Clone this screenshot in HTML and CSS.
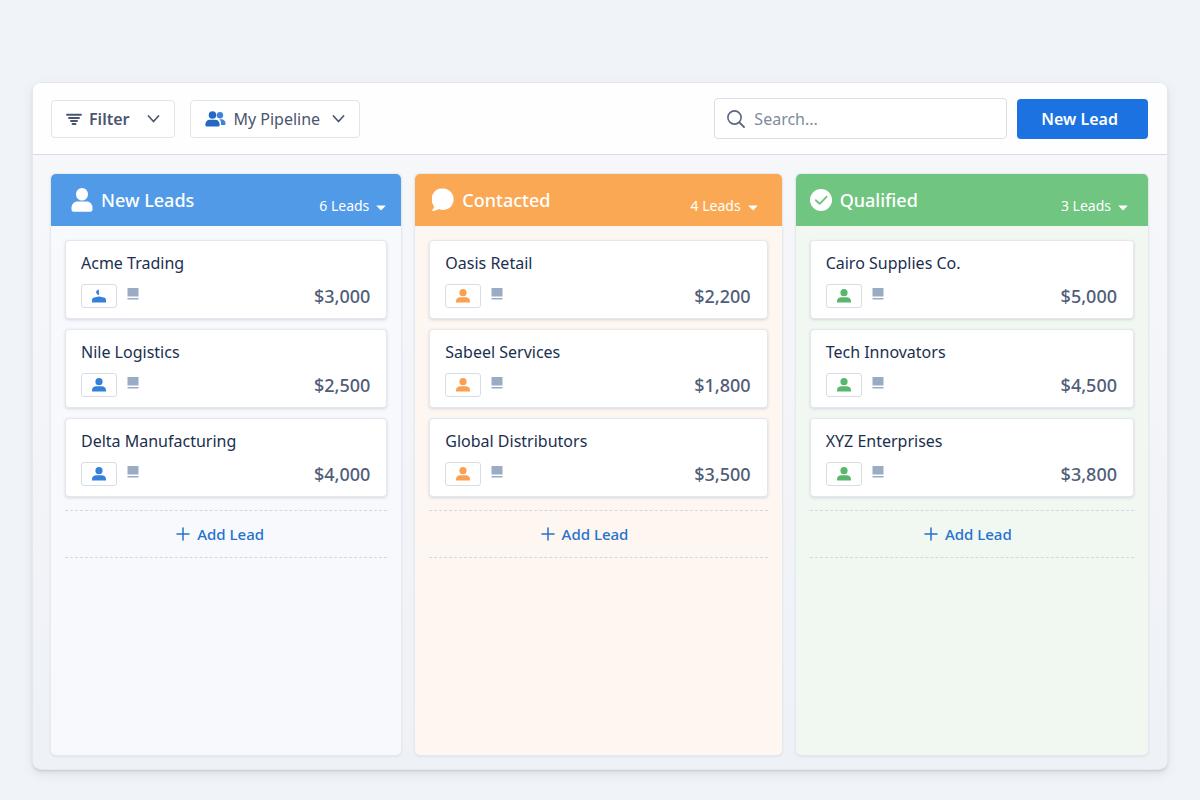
FILE: index.html
```html
<!DOCTYPE html>
<html lang="en">
<head>
<meta charset="utf-8">
<meta name="viewport" content="width=device-width, initial-scale=1">
<title>Leads pipeline</title>
<link rel="stylesheet" href="styles.css">
</head>
<body>
<svg class="sprite" aria-hidden="true">
  <symbol id="person" viewBox="0 0 22 24"><ellipse cx="11" cy="6.3" rx="6" ry="6.3"/><path d="M.5 20c0-4.200 2.600-6.600 6-6.600h9c3.400 0 6 2.400 6 6.600v1.500a2.200 2.200 0 0 1-2.200 2.200H2.700A2.200 2.200 0 0 1 .5 21.500z"/></symbol>
  <symbol id="user" viewBox="0 0 14 14"><circle cx="7" cy="3.700" r="3.600"/><path d="M0 13.600v-1.100C0 9.700 2 8.300 4.300 8.300h5.400c2.300 0 4.300 1.400 4.300 4.200v1.100z"/></symbol>
  <symbol id="user-part" viewBox="0 0 14 14"><path d="M6.800.6C3.500 1.200 3 4.800 6.800 6.200c1-1.500-.2-2.400 0-5.600z"/><path d="M0 13.600v-2.400C0 9.300 1 8.400 2.300 8.400c1.700 0 2.400-.8 4.700-.8s3 .8 4.700.8c1.300 0 2.300.9 2.300 2.800v2.400z"/></symbol>
  <symbol id="note" viewBox="0 0 12 12"><path d="M.5 0h11v8.500H.5zM.5 10h11v1.500H.5z"/></symbol>
  <symbol id="chevron" viewBox="0 0 12 8"><path d="M1 1l5 5.500L11 1" fill="none" stroke="currentColor" stroke-width="1.700" stroke-linecap="round" stroke-linejoin="round"/></symbol>
  <symbol id="caret" viewBox="0 0 10 6"><path d="M.8.500h8.400q.7 0 .2.600L5.500 5q-.5.500-1 0L.6 1.100Q.1.500.8.500z"/></symbol>
  <symbol id="plus" viewBox="0 0 14 14"><path d="M7 1v12M1 7h12" fill="none" stroke="currentColor" stroke-width="1.500" stroke-linecap="round"/></symbol>
</svg>

<main class="panel">
  <header class="toolbar">
    <button class="btn btn-filter" type="button">
      <svg class="i-filter" viewBox="0 0 16 12" aria-hidden="true"><path d="M1 1.700h14M3 5h10M5 8h6M6.500 11h3" fill="none" stroke="currentColor" stroke-width="1.900" stroke-linecap="round"/></svg>
      <span>Filter</span>
      <svg class="i-chevron"><use href="#chevron"/></svg>
    </button>
    <button class="btn btn-pipeline" type="button">
      <svg class="i-team" viewBox="0 0 21 16" aria-hidden="true"><g fill="#3f83d6"><circle cx="15" cy="4.300" r="3.200"/><path d="M14.500 8.300h1.700c2.700 0 4.300 1.700 4.300 4v.7q0 1-1 1h-3.500c.3-2.500-.2-4.200-1.500-5.700z"/></g><g fill="#2468c4"><circle cx="7.500" cy="4" r="3.800"/><path d="M.3 14c0-3.200 1.800-5.200 4.500-5.200h5.400c2.700 0 4.500 2 4.500 5.200q0 1.400-1.300 1.400H1.600Q.3 15.400.3 14z"/></g></svg>
      <span>My Pipeline</span>
      <svg class="i-chevron"><use href="#chevron"/></svg>
    </button>
    <label class="search">
      <svg class="i-search" viewBox="0 0 18 18" aria-hidden="true"><circle cx="7.500" cy="7.500" r="6.600" fill="none" stroke="currentColor" stroke-width="1.600"/><path d="M12.300 12.300l4.700 4.700" stroke="currentColor" stroke-width="1.800" stroke-linecap="round"/></svg>
      <input type="search" placeholder="Search..." aria-label="Search">
    </label>
    <button class="btn-primary" type="button">New Lead</button>
  </header>

  <div class="board">
    <section class="column new">
      <header class="column-head">
        <svg class="head-icon"><use href="#person"/></svg>
        <h2>New Leads</h2>
        <button class="count" type="button">6 Leads <svg class="i-caret"><use href="#caret"/></svg></button>
      </header>
      <div class="cards">
        <article class="card"><h3>Acme Trading</h3><div class="meta"><span class="owner"><svg><use href="#user-part"/></svg></span><svg class="i-note"><use href="#note"/></svg><span class="price">$3,000</span></div></article>
        <article class="card"><h3>Nile Logistics</h3><div class="meta"><span class="owner"><svg><use href="#user"/></svg></span><svg class="i-note"><use href="#note"/></svg><span class="price">$2,500</span></div></article>
        <article class="card"><h3>Delta Manufacturing</h3><div class="meta"><span class="owner"><svg><use href="#user"/></svg></span><svg class="i-note"><use href="#note"/></svg><span class="price">$4,000</span></div></article>
      </div>
      <button class="add" type="button"><svg class="i-plus"><use href="#plus"/></svg>Add Lead</button>
    </section>

    <section class="column contacted">
      <header class="column-head">
        <svg class="head-icon" viewBox="0 0 22 24"><path d="M11.500.6a10.500 10.700 0 1 1-4.600 20.500C4.800 22.400 2.700 23 .6 23c-.6 0-.8-.5-.3-.9 1.100-.9 1.700-2 1.600-4.200A10.500 10.700 0 0 1 11.500.6z"/></svg>
        <h2>Contacted</h2>
        <button class="count" type="button">4 Leads <svg class="i-caret"><use href="#caret"/></svg></button>
      </header>
      <div class="cards">
        <article class="card"><h3>Oasis Retail</h3><div class="meta"><span class="owner"><svg><use href="#user"/></svg></span><svg class="i-note"><use href="#note"/></svg><span class="price">$2,200</span></div></article>
        <article class="card"><h3>Sabeel Services</h3><div class="meta"><span class="owner"><svg><use href="#user"/></svg></span><svg class="i-note"><use href="#note"/></svg><span class="price">$1,800</span></div></article>
        <article class="card"><h3>Global Distributors</h3><div class="meta"><span class="owner"><svg><use href="#user"/></svg></span><svg class="i-note"><use href="#note"/></svg><span class="price">$3,500</span></div></article>
      </div>
      <button class="add" type="button"><svg class="i-plus"><use href="#plus"/></svg>Add Lead</button>
    </section>

    <section class="column qualified">
      <header class="column-head">
        <svg class="head-icon" viewBox="0 0 22 24"><circle cx="11" cy="12" r="11"/><path d="M5.800 12.300l3.900 3.500 6.800-7" fill="none" stroke="#6fc57e" stroke-width="1.900" stroke-linecap="round" stroke-linejoin="round"/></svg>
        <h2>Qualified</h2>
        <button class="count" type="button">3 Leads <svg class="i-caret"><use href="#caret"/></svg></button>
      </header>
      <div class="cards">
        <article class="card"><h3>Cairo Supplies Co.</h3><div class="meta"><span class="owner"><svg><use href="#user"/></svg></span><svg class="i-note"><use href="#note"/></svg><span class="price">$5,000</span></div></article>
        <article class="card"><h3>Tech Innovators</h3><div class="meta"><span class="owner"><svg><use href="#user"/></svg></span><svg class="i-note"><use href="#note"/></svg><span class="price">$4,500</span></div></article>
        <article class="card"><h3>XYZ Enterprises</h3><div class="meta"><span class="owner"><svg><use href="#user"/></svg></span><svg class="i-note"><use href="#note"/></svg><span class="price">$3,800</span></div></article>
      </div>
      <button class="add" type="button"><svg class="i-plus"><use href="#plus"/></svg>Add Lead</button>
    </section>
  </div>
</main>
</body>
</html>
```

FILE: styles.css
```css
* { box-sizing: border-box; }

body {
  margin: 0;
  min-height: 100vh;
  display: flex;
  padding: 83px 33px 31px;
  background: #f0f4f8;
  color: #1b2f4f;
  font-family: "Noto Sans", "Open Sans", sans-serif;
  font-size: 16px;
}

button, input { font: inherit; color: inherit; }
button { cursor: pointer; }
h2, h3 { margin: 0; }
svg { flex: none; fill: currentColor; }
.sprite { position: absolute; width: 0; height: 0; }

.panel {
  flex: 1;
  min-width: 0;
  display: flex;
  flex-direction: column;
  border-radius: 8px;
  background: linear-gradient(#f7f8fa, #eef1f6);
  box-shadow: 0 0 0 1px #e4e8ee, 0 2px 3px #c3c8d2, 0 4px 12px #d9dee6;
}

.toolbar {
  display: flex;
  align-items: center;
  padding: 15px 19px 15px 18px;
  border-bottom: 1px solid #d9dce2;
  border-radius: 8px 8px 0 0;
  background: #fefefe;
}

.btn {
  display: flex;
  align-items: center;
  height: 38px;
  padding: 0 14px;
  border: 1px solid #e0e4eb;
  border-radius: 4px;
  background: #fff;
  color: #4a5670;
}
.btn-filter { margin-right: 15px; font-weight: 600; }
.btn-filter span { margin: 0 18px 0 7px; }
.btn-pipeline span { margin: 0 12px 0 7px; }
.i-filter { width: 16px; height: 12px; }
.i-team { width: 21px; height: 16px; }
.i-chevron { width: 13px; height: 8px; }

.search {
  display: flex;
  align-items: center;
  gap: 9px;
  width: 293px;
  height: 41px;
  margin: 0 10px 0 auto;
  padding: 0 12px;
  border: 1px solid #dadfe7;
  border-radius: 4px;
  background: #fff;
  color: #5a6680;
}
.search input {
  flex: 1;
  min-width: 0;
  padding: 0;
  border: 0;
  outline: 0;
  background: none;
}
.search input::placeholder { color: #7e8a9e; opacity: 1; }
.i-search { width: 18px; height: 18px; }

.btn-primary {
  height: 40px;
  padding: 0 30px 0 24px;
  border: 0;
  border-radius: 4px;
  background: #1b72e0;
  color: #fff;
  font-weight: 600;
}

.board {
  flex: 1;
  display: grid;
  grid-template-columns: 350fr 366fr 352fr;
  gap: 14px;
  padding: 19px 19px 14px 18px;
}

.column {
  min-width: 0;
  display: flex;
  flex-direction: column;
  border-radius: 5px;
  background: var(--tint);
  box-shadow: 0 0 0 1px #e6e9ef, 0 1px 3px #ced3dc;
}
.new { --accent: #509ae8; --icon: #3580d8; --tint: #f8f9fd; --lead: 20px; --trail: 15px; --shift: 12px; }
.contacted { --accent: #fba855; --icon: #fba050; --tint: #fef6f0; --lead: 17px; --trail: 24px; --shift: 28px; }
.qualified { --accent: #70c580; --icon: #58b76c; --tint: #f1f7f1; --lead: 14px; --trail: 20px; --shift: 8px; }

.column-head {
  display: flex;
  align-items: flex-end;
  height: 52px;
  padding: 0 var(--trail) 8px var(--lead);
  border-radius: 5px 5px 0 0;
  background: var(--accent);
  color: #fff;
}
.head-icon { width: 22px; height: 24px; margin: 0 8px 6px 0; }
.column-head h2 { font-size: 18px; font-weight: 500; line-height: 36px; }
.count {
  display: flex;
  align-items: center;
  gap: 7px;
  margin-left: auto;
  padding: 0;
  border: 0;
  background: none;
  font-size: 14px;
  line-height: 24px;
}
.i-caret { width: 10px; height: 6px; margin-top: 3px; }

.cards {
  display: grid;
  gap: 10px;
  padding: 14px 14px 13px;
}
.card {
  padding: 10px 16px 10px 15px;
  border: 1px solid #e4e7ed;
  border-radius: 4px;
  background: #fff;
  box-shadow: 0 1px 3px #d3d7df;
}
.card h3 { font-size: 16px; font-weight: 400; line-height: 24px; }
.meta {
  display: flex;
  align-items: flex-start;
  margin-top: 9px;
}
.owner {
  display: grid;
  place-items: center;
  width: 36px;
  height: 24px;
  border: 1px solid #d8dde5;
  border-radius: 3px;
  color: var(--icon);
}
.owner svg { width: 14px; height: 14px; }
.i-note { width: 12px; height: 12px; margin: 4px 0 0 10px; color: #9aacc4; }
.price {
  margin-left: auto;
  color: #505d78;
  font-size: 18px;
  font-weight: 500;
  line-height: 24px;
}

.add {
  display: flex;
  align-items: center;
  justify-content: center;
  gap: 7px;
  height: 48px;
  margin: 0 14px;
  padding: 0 var(--shift) 0 0;
  border: dashed #d3d7df;
  border-width: 1px 0;
  background: none;
  color: #2472cc;
  font-size: 15px;
  font-weight: 500;
}
.i-plus { width: 14px; height: 14px; }
```
